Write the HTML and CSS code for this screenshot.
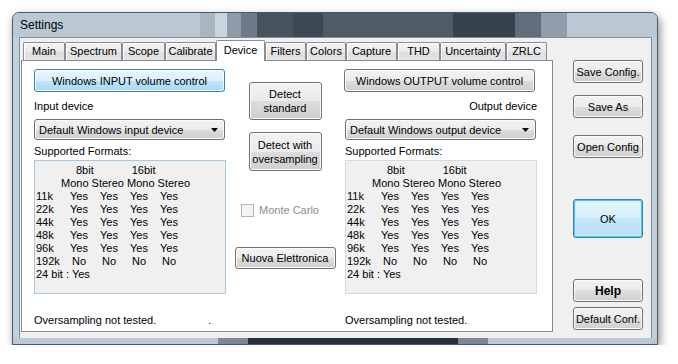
FILE: index.html
```html
<!DOCTYPE html>
<html lang="en">
<head>
  <meta charset="UTF-8" />
  <title>Settings</title>
  <link rel="stylesheet" href="styles.css">
</head>
<body>

  <div class="window">
    <div class="titlebar">
      <span class="title">Settings</span>
      <!-- glass streaks from the desktop showing through -->
      <span class="glass g1"></span>
      <span class="glass g2"></span>
      <span class="glass g3"></span>
      <span class="glass g4"></span>
      <span class="glass g5"></span>
      <span class="glass g6"></span>
      <span class="glass g7"></span>
      <span class="glass g8"></span>
      <span class="glass g9"></span>
      <span class="glass g10"></span>
    </div>

    <div class="client">
      <!-- Tab control -->
      <div class="tabctl">
        <div class="tabs">
          <div class="tab tab-main">Main</div>
          <div class="tab tab-spectrum">Spectrum</div>
          <div class="tab tab-scope">Scope</div>
          <div class="tab tab-calibrate">Calibrate</div>
          <div class="tab tab-device selected">Device</div>
          <div class="tab tab-filters">Filters</div>
          <div class="tab tab-colors">Colors</div>
          <div class="tab tab-capture">Capture</div>
          <div class="tab tab-thd">THD</div>
          <div class="tab tab-uncert">Uncertainty</div>
          <div class="tab tab-zrlc">ZRLC</div>
        </div>

        <div class="panel">
          <!-- Input side -->
          <div class="col col-in">
            <button class="btn btn-hot btn-volume">Windows INPUT volume control</button>
            <div class="label">Input device</div>
            <div class="combo">
              <span>Default Windows input device</span>
              <svg width="7" height="4" viewBox="0 0 7 4"><path d="M0 0h7L3.5 4z" fill="#000"/></svg>
            </div>
            <div class="label caption">Supported Formats:</div>
            <div class="formats formats-focus">
              <div class="frow bits"><span>8bit</span><span class="b16">16bit</span></div>
              <div class="frow modes">Mono Stereo Mono Stereo</div>
              <div class="frow rate"><span>11k</span><span>Yes</span><span>Yes</span><span>Yes</span><span>Yes</span></div>
              <div class="frow rate"><span>22k</span><span>Yes</span><span>Yes</span><span>Yes</span><span>Yes</span></div>
              <div class="frow rate"><span>44k</span><span>Yes</span><span>Yes</span><span>Yes</span><span>Yes</span></div>
              <div class="frow rate"><span>48k</span><span>Yes</span><span>Yes</span><span>Yes</span><span>Yes</span></div>
              <div class="frow rate"><span>96k</span><span>Yes</span><span>Yes</span><span>Yes</span><span>Yes</span></div>
              <div class="frow rate"><span>192k</span><span>No</span><span>No</span><span>No</span><span>No</span></div>
              <div class="frow">24 bit : Yes</div>
            </div>
            <div class="status">Oversampling not tested.<span class="dot">.</span></div>
          </div>

          <!-- Middle buttons -->
          <div class="mid">
            <button class="btn btn-detect">Detect<br>standard</button>
            <button class="btn btn-detect btn-over">Detect with<br>oversampling</button>
            <label class="check">
              <span class="box"></span>
              <span>Monte Carlo</span>
            </label>
            <button class="btn btn-nuova">Nuova Elettronica</button>
          </div>

          <!-- Output side -->
          <div class="col col-out">
            <button class="btn btn-volume">Windows OUTPUT volume control</button>
            <div class="label label-right">Output device</div>
            <div class="combo">
              <span>Default Windows output device</span>
              <svg width="7" height="4" viewBox="0 0 7 4"><path d="M0 0h7L3.5 4z" fill="#000"/></svg>
            </div>
            <div class="label caption">Supported Formats:</div>
            <div class="formats">
              <div class="frow bits"><span>8bit</span><span class="b16">16bit</span></div>
              <div class="frow modes">Mono Stereo Mono Stereo</div>
              <div class="frow rate"><span>11k</span><span>Yes</span><span>Yes</span><span>Yes</span><span>Yes</span></div>
              <div class="frow rate"><span>22k</span><span>Yes</span><span>Yes</span><span>Yes</span><span>Yes</span></div>
              <div class="frow rate"><span>44k</span><span>Yes</span><span>Yes</span><span>Yes</span><span>Yes</span></div>
              <div class="frow rate"><span>48k</span><span>Yes</span><span>Yes</span><span>Yes</span><span>Yes</span></div>
              <div class="frow rate"><span>96k</span><span>Yes</span><span>Yes</span><span>Yes</span><span>Yes</span></div>
              <div class="frow rate"><span>192k</span><span>No</span><span>No</span><span>No</span><span>No</span></div>
              <div class="frow">24 bit : Yes</div>
            </div>
            <div class="status">Oversampling not tested.</div>
          </div>
        </div>
      </div>

      <!-- Right hand buttons -->
      <div class="side">
        <button class="btn side-btn">Save Config.</button>
        <button class="btn side-btn save-as">Save As</button>
        <button class="btn side-btn open">Open Config</button>
        <button class="btn btn-default side-btn ok">OK</button>
        <button class="btn side-btn help">Help</button>
        <button class="btn side-btn defconf">Default Conf.</button>
      </div>
    </div>

    <div class="frame-bottom">
      <span class="streak s1"></span>
      <span class="streak s2"></span>
      <span class="streak s1"></span>
    </div>
  </div>

</body>
</html>
```

FILE: styles.css
```css
/* Global */
* {
  box-sizing: border-box;
}

body {
  margin: 0;
  background: #fff;
  font-family: "Liberation Sans", Arial, sans-serif;
  font-size: 11px;
  color: #000;
}

/* Window frame */
.window {
  width: 646px;
  height: 333px;
  margin: 12px 0 0 12px;
  border: 1px solid #4a5965;
  border-radius: 7px 7px 0 0;
  background-color: #c2d0db;
  box-shadow: 2px 4px 10px rgba(0, 0, 0, 0.45);
  overflow: hidden;
}

/* Aero glass title bar */
.titlebar {
  display: flex;
  height: 24px;
  padding-left: 7px;
  font-size: 12px;
  line-height: 24px;
  background-color: #bac8d3;
}

.title {
  width: 180px;
}

.glass { height: 24px; }
.g1 { width: 15px; background-color: #a7b6c1; }
.g2 { width: 12px; background-color: #c9d4dc; }
.g3 { width: 14px; background-color: #8d9ca8; }
.g4 { width: 16px; background-color: #6c7b87; }
.g5 { width: 36px; background-color: #45535e; }
.g6 { width: 30px; background-color: #3a4853; }
.g7 { width: 130px; background-color: #4e5c67; }
.g8 { width: 62px; background-color: #36434d; }
.g9 { width: 26px; background-color: #5f6e7a; }
.g10 { width: 26px; background-color: #8f9eaa; }

.frame-bottom {
  display: flex;
  height: 6px;
  margin-top: -1px;
  padding-left: 205px;
  background-color: #b9c8d4;
}

.streak { height: 6px; }
.s1 { width: 30px; background-color: #7a8995; }
.s2 { width: 210px; background-color: #26313a; }

.client {
  display: flex;
  height: 302px;
  margin: 0 5px 0 6px;
  border: 1px solid #7e8f9c;
  background: #f0f0f0;
}

/* Tabs */
.tabctl {
  margin-left: 1px;
}

.tabs {
  display: flex;
  align-items: flex-end;
  height: 22px;
  padding-left: 2px;
}

.tab {
  position: relative;
  height: 18px;
  line-height: 17px;
  text-align: center;
  border: 1px solid #898c95;
  border-bottom: none;
  border-radius: 2px 2px 0 0;
  background: linear-gradient(#f3f3f3, #ebebeb 50%, #dedede 50%, #e4e4e4);
  box-shadow: inset 1px 1px 0 #fff;
}

.tab.selected {
  z-index: 1;
  height: 21px;
  margin-bottom: -1px;
  line-height: 18px;
  background: #fff;
  box-shadow: none;
}

.tab-main { width: 42px; }
.tab-spectrum { width: 57px; }
.tab-scope { width: 43px; }
.tab-calibrate { width: 51px; }
.tab-device { width: 49px; }
.tab-filters { width: 41px; }
.tab-colors { width: 40px; }
.tab-capture { width: 51px; }
.tab-thd { width: 43px; }
.tab-uncert { width: 66px; }
.tab-zrlc { width: 41px; }

.panel {
  display: grid;
  grid-template-columns: 192px 118px 193px;
  width: 532px;
  height: 272px;
  padding-left: 12px;
  border: 1px solid #898c95;
  background: #fff;
}

/* Buttons */
.btn {
  display: block;
  padding: 0;
  font: inherit;
  color: #000;
  border: 1px solid #707070;
  border-radius: 3px;
  background: linear-gradient(#f2f2f2, #ebebeb 50%, #dddddd 50%, #cfcfcf);
  box-shadow: inset 0 0 0 1px #fbfbfb;
  cursor: pointer;
}

.btn-hot {
  border-color: #3c7fb1;
  background: linear-gradient(#eaf6fd, #d9f0fc 50%, #bee6fd 50%, #a7d9f5);
}

.btn-default {
  border-color: #3c7fb1;
  background: linear-gradient(#e5f4fc, #d6eefb 50%, #c5e6f8 50%, #bddff3);
  box-shadow: inset 0 0 0 1px #47c4f4, inset 0 0 0 2px #cdeefc;
}

/* Columns */
.col {
  display: flex;
  flex-direction: column;
}

.col-out {
  padding-left: 1px;
}

.btn-volume {
  width: 191px;
  height: 23px;
  margin-top: 8px;
}

.col-out .btn-volume {
  margin-left: -1px;
}

.label {
  height: 13px;
  line-height: 13px;
  margin-top: 8px;
}

.label-right {
  text-align: right;
}

.caption {
  margin-top: 5px;
}

.combo {
  display: flex;
  align-items: center;
  justify-content: space-between;
  width: 191px;
  height: 21px;
  margin-top: 6px;
  padding: 0 6px 0 4px;
  border: 1px solid #707070;
  border-radius: 3px;
  background: linear-gradient(#f2f2f2, #ebebeb 50%, #dddddd 50%, #cfcfcf);
  box-shadow: inset 0 0 0 1px #fbfbfb;
}

.formats {
  width: 192px;
  height: 134px;
  margin-top: 2px;
  padding: 3px 0 0 1px;
  border: 1px solid #d9d9d9;
  background: #f0f0f0;
}

.formats-focus {
  border-color: #a9c8de;
}

.frow {
  height: 13px;
  line-height: 13px;
  white-space: nowrap;
}

.bits {
  padding-left: 40px;
}

.b16 {
  margin-left: 38px;
}

.modes {
  padding-left: 25px;
}

.rate {
  display: grid;
  grid-template-columns: 28px repeat(4, 30px);
}

.rate span + span {
  text-align: center;
}

.status {
  margin-top: 20px;
  height: 13px;
  line-height: 13px;
}

.dot {
  margin-left: 52px;
}

/* Middle */
.mid {
  display: flex;
  flex-direction: column;
  align-items: center;
}

.btn-detect {
  width: 73px;
  height: 38px;
  margin-top: 21px;
  line-height: 14px;
}

.btn-over {
  height: 39px;
  margin-top: 12px;
}

.check {
  display: flex;
  align-items: center;
  gap: 5px;
  height: 14px;
  margin-top: 32px;
  margin-left: -10px;
  color: #8d8d8d;
}

.check .box {
  width: 13px;
  height: 13px;
  border: 1px solid #b5b5b5;
  background: #f4f4f4;
}

.btn-nuova {
  width: 101px;
  height: 22px;
  margin-top: 30px;
}

/* Right column */
.side {
  display: flex;
  flex-direction: column;
  margin-left: 20px;
  padding-top: 22px;
}

.side-btn {
  width: 70px;
  height: 23px;
}

.save-as {
  margin-top: 12px;
}

.open {
  margin-top: 17px;
}

.ok {
  height: 39px;
  margin-top: 41px;
}

.help {
  margin-top: 41px;
  font-weight: bold;
  font-size: 12px;
}

.defconf {
  height: 23px;
  margin-top: 5px;
}
```
